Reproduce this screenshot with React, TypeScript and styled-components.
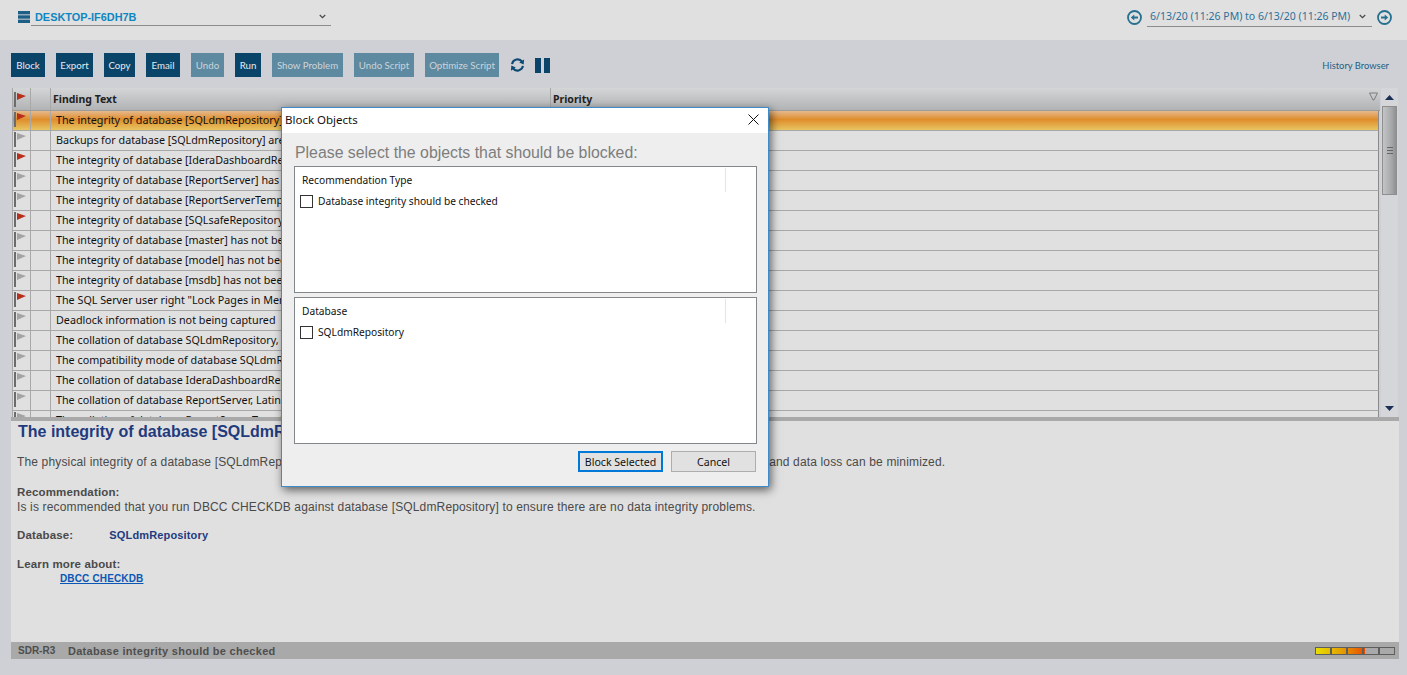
import React from 'react';
import styled, { createGlobalStyle } from 'styled-components';

const findings = [
  { text: 'The integrity of database [SQLdmRepository] has not been checked recently', red: true, selected: true },
  { text: 'Backups for database [SQLdmRepository] are not current', red: false },
  { text: 'The integrity of database [IderaDashboardRepository] has not been checked', red: true },
  { text: 'The integrity of database [ReportServer] has not been checked recently', red: false },
  { text: 'The integrity of database [ReportServerTempDB] has not been checked', red: false },
  { text: 'The integrity of database [SQLsafeRepository] has not been checked', red: true },
  { text: 'The integrity of database [master] has not been checked recently', red: false },
  { text: 'The integrity of database [model] has not been checked recently', red: false },
  { text: 'The integrity of database [msdb] has not been checked recently', red: false },
  { text: 'The SQL Server user right "Lock Pages in Memory" is not granted', red: true },
  { text: 'Deadlock information is not being captured', red: false },
  { text: 'The collation of database SQLdmRepository, Latin1 differs from the server', red: false },
  { text: 'The compatibility mode of database SQLdmRepository is out of date', red: false },
  { text: 'The collation of database IderaDashboardRepository differs', red: false },
  { text: 'The collation of database ReportServer, Latin1 differs from the server', red: false },
  { text: 'The collation of database ReportServerTempDB differs', red: false },
];

const actions = [
  { label: 'Block', width: 34 },
  { label: 'Export', width: 37 },
  { label: 'Copy', width: 31 },
  { label: 'Email', width: 34 },
  { label: 'Undo', width: 33, muted: true },
  { label: 'Run', width: 26 },
  { label: 'Show Problem', width: 71, muted: true },
  { label: 'Undo Script', width: 60, muted: true },
  { label: 'Optimize Script', width: 74, muted: true },
];

const FlagIcon = ({ red }: { red: boolean }) => (
  <svg width="13" height="15" viewBox="0 0 13 15" style={{ display: 'block' }}>
    <rect x="0" y="0" width="2" height="15" fill="#6b6b6b" />
    <path d="M3 1 L12 4 L3 8 Z" fill={red ? '#b8301c' : '#a3a3a3'} />
  </svg>
);

const ArrowCircle = ({ flip }: { flip?: boolean }) => (
  <svg width="15" height="15" viewBox="0 0 15 15" style={flip ? { transform: 'scaleX(-1)' } : undefined}>
    <circle cx="7.5" cy="7.5" r="6.5" fill="none" stroke="#23708f" strokeWidth="1.8" />
    <path d="M3.8 7.5 L7.3 4.4 V6.5 H11 V8.5 H7.3 V10.6 Z" fill="#23708f" />
  </svg>
);

const Chevron = () => (
  <svg width="7" height="5" viewBox="0 0 9 6">
    <path d="M1 1 L4.5 4.5 L8 1" fill="none" stroke="#4a4a4a" strokeWidth="1.6" />
  </svg>
);

export default function App() {
  return (
    <Page>
      <GlobalStyle />
      <TopBar>
        <ServerPicker>
          <svg width="12" height="12" viewBox="0 0 12 12">
            <rect width="12" height="3.4" fill="#1d5f86" />
            <rect y="4.3" width="12" height="3.4" fill="#1d5f86" />
            <rect y="8.6" width="12" height="3.4" fill="#1d5f86" />
          </svg>
          <ServerSelect>
            <ServerName>DESKTOP-IF6DH7B</ServerName>
            <Chevron />
          </ServerSelect>
        </ServerPicker>
        <DateRange>
          <ArrowCircle />
          <DateSelect>
            <DateText>6/13/20 (11:26 PM) to 6/13/20 (11:26 PM)</DateText>
            <Chevron />
          </DateSelect>
          <ArrowCircle flip />
        </DateRange>
      </TopBar>

      <Main>
        <Toolbar>
          {actions.map((a) => (
            <ActionButton key={a.label} $width={a.width} $muted={a.muted}>
              {a.label}
            </ActionButton>
          ))}
          <ToolIcons>
            <svg width="15" height="16" viewBox="0 0 16 16">
              <path d="M2.2 7 A6 6 0 0 1 13 4.6" fill="none" stroke="#0d4a73" strokeWidth="2.2" />
              <path d="M15 2 L14.6 7.4 L9.8 5.4 Z" fill="#0d4a73" />
              <path d="M13.8 9 A6 6 0 0 1 3 11.4" fill="none" stroke="#0d4a73" strokeWidth="2.2" />
              <path d="M1 14 L1.4 8.6 L6.2 10.6 Z" fill="#0d4a73" />
            </svg>
            <PauseIcon>
              <span />
              <span />
            </PauseIcon>
          </ToolIcons>
          <HistoryLink>History Browser</HistoryLink>
        </Toolbar>

        <GridArea>
          <Grid>
            <GridHeader>
              <HeaderFlagCell>
                <FlagIcon red />
              </HeaderFlagCell>
              <BlankCell />
              <HeaderCell $width={500}>Finding Text</HeaderCell>
              <PriorityCell>
                Priority
                <svg width="9" height="9" viewBox="0 0 9 9">
                  <path d="M0.5 1 H8.5 L5 8 H4 Z" fill="none" stroke="#7d7d7d" />
                </svg>
              </PriorityCell>
            </GridHeader>
            {findings.map((f) => (
              <Row key={f.text} $selected={f.selected}>
                <FlagCell>
                  <FlagIcon red={f.red} />
                </FlagCell>
                <BlankCell />
                <FindingCell>{f.text}</FindingCell>
              </Row>
            ))}
          </Grid>
          <Scrollbar>
            <ScrollArrow>
              <svg width="9" height="5" viewBox="0 0 9 5">
                <path d="M4.5 0 L9 5 H0 Z" fill="#1c2f55" />
              </svg>
            </ScrollArrow>
            <ScrollThumb>
              <Grip />
            </ScrollThumb>
            <ScrollTrack />
            <ScrollArrow>
              <svg width="9" height="5" viewBox="0 0 9 5">
                <path d="M4.5 5 L9 0 H0 Z" fill="#1c2f55" />
              </svg>
            </ScrollArrow>
          </Scrollbar>
        </GridArea>

        <Splitter />

        <Detail>
          <DetailTitle>The integrity of database [SQLdmRepository] has not been checked recently</DetailTitle>
          <DetailText>
            The physical integrity of a database [SQLdmRepository] should be checked on a regular schedule so that any
            corruption is detected early and data loss can be minimized.
          </DetailText>
          <DetailBlock>
            <strong>Recommendation:</strong>
            <br />
            Is is recommended that you run DBCC CHECKDB against database [SQLdmRepository] to ensure there are no data
            integrity problems.
          </DetailBlock>
          <DatabaseLine>
            <strong>Database:</strong>
            <DatabaseName>SQLdmRepository</DatabaseName>
          </DatabaseLine>
          <LearnMore>
            <strong>Learn more about:</strong>
            <DocLink>DBCC CHECKDB</DocLink>
          </LearnMore>
        </Detail>

        <Footer>
          <RuleCode>SDR-R3</RuleCode>
          <FooterTitle>Database integrity should be checked</FooterTitle>
          <Meter>
            <MeterFill />
            <MeterSeg />
            <MeterSeg />
            <MeterSeg />
            <MeterSeg />
            <MeterSeg />
          </Meter>
        </Footer>
      </Main>

      <Dialog>
        <DialogTitle>
          <span>Block Objects</span>
          <svg width="11" height="11" viewBox="0 0 11 11">
            <path d="M0.5 0.5 L10.5 10.5 M10.5 0.5 L0.5 10.5" stroke="#111" strokeWidth="1" />
          </svg>
        </DialogTitle>
        <DialogBody>
          <Prompt>Please select the objects that should be blocked:</Prompt>
          <ListBox $height={127}>
            <ListHeader>Recommendation Type</ListHeader>
            <CheckRow>
              <CheckBox />
              Database integrity should be checked
            </CheckRow>
          </ListBox>
          <ListBox $height={147}>
            <ListHeader>Database</ListHeader>
            <CheckRow>
              <CheckBox />
              SQLdmRepository
            </CheckRow>
          </ListBox>
          <DialogActions>
            <DialogButton $primary>Block Selected</DialogButton>
            <DialogButton>Cancel</DialogButton>
          </DialogActions>
        </DialogBody>
      </Dialog>
    </Page>
  );
}

const GlobalStyle = createGlobalStyle`
  html, body {
    margin: 0;
    padding: 0;
    background: #cfd0d5;
  }
  * {
    box-sizing: border-box;
  }
`;

const Page = styled.div`
  position: relative;
  width: 1407px;
  height: 675px;
  overflow: hidden;
  display: flex;
  flex-direction: column;
  background: #cfd0d5;
  font-family: 'Noto Sans', sans-serif;
`;

const TopBar = styled.div`
  height: 40px;
  flex: none;
  display: flex;
  justify-content: space-between;
  background: #e0e0e0;
  padding: 0 15px 0 18px;
`;

const ServerPicker = styled.div`
  display: flex;
  align-items: flex-start;
  gap: 1px;
  padding-top: 11px;
`;

const ServerSelect = styled.div`
  width: 300px;
  height: 15px;
  display: flex;
  justify-content: space-between;
  align-items: center;
  padding: 0 5px 3px 4px;
  border-bottom: 1px solid #8c8c8c;
`;

const ServerName = styled.span`
  font-family: 'Liberation Sans', sans-serif;
  font-size: 10.9px;
  font-weight: 700;
  color: #0f86c0;
`;

const DateRange = styled.div`
  display: flex;
  align-items: center;
  gap: 5px;
  height: 34px;
`;

const DateSelect = styled.div`
  width: 225px;
  height: 19px;
  margin-top: 1px;
  display: flex;
  justify-content: space-between;
  align-items: center;
  padding: 0 6px 2px 3px;
  border-bottom: 1px solid #8c8c8c;
`;

const DateText = styled.span`
  font-size: 10.5px;
  color: #2d7199;
  white-space: nowrap;
`;

const Main = styled.div`
  flex: 1;
  display: flex;
  flex-direction: column;
  padding: 0 8px 16px 11px;
  min-height: 0;
`;

const Toolbar = styled.div`
  height: 48px;
  flex: none;
  display: flex;
  align-items: flex-start;
  gap: 11px;
  padding-top: 13px;
`;

const ActionButton = styled.div<{ $width: number; $muted?: boolean }>`
  width: ${({ $width }) => $width}px;
  height: 24px;
  display: flex;
  align-items: center;
  justify-content: center;
  font-family: Lato, sans-serif;
  font-size: 9.7px;
  white-space: nowrap;
  background: ${({ $muted }) => ($muted ? '#5d8aa1' : '#0b4469')};
  color: ${({ $muted }) => ($muted ? '#ccd4da' : '#e6ebef')};
`;

const ToolIcons = styled.div`
  display: flex;
  align-items: center;
  gap: 10px;
  height: 24px;
`;

const PauseIcon = styled.div`
  display: flex;
  gap: 3px;
  span {
    display: block;
    width: 6px;
    height: 15px;
    background: #0b4469;
  }
`;

const HistoryLink = styled.div`
  margin-left: auto;
  margin-right: 10px;
  height: 24px;
  line-height: 26px;
  font-family: Lato, sans-serif;
  font-size: 9.4px;
  color: #1c5f86;
`;

const GridArea = styled.div`
  height: 329px;
  flex: none;
  display: flex;
  gap: 1px;
  overflow: hidden;
`;

const Grid = styled.div`
  width: 1369px;
  padding-left: 1px;
  overflow: hidden;
`;

const GridHeader = styled.div`
  height: 23px;
  display: flex;
  background: linear-gradient(#d3d5d7, #b2b3b4);
  border-bottom: 1px solid #9c9c9c;
`;

const Row = styled.div<{ $selected?: boolean }>`
  height: 20px;
  margin-right: 1px;
  display: flex;
  border-bottom: 1px solid #a8a8a8;
  border-right: 1px solid #8a8a8a;
  background: ${({ $selected }) =>
    $selected ? 'linear-gradient(#e5b98d, #e08d2c 45%, #e7c662)' : '#e0e0e0'};
`;

const FlagCell = styled.div`
  width: 19px;
  flex: none;
  padding: 1px 0 0 1px;
  border-left: 1px solid #a8a8a8;
  border-right: 1px solid #a8a8a8;
  overflow: hidden;
`;

const HeaderFlagCell = styled(FlagCell)`
  padding-top: 4px;
`;

const BlankCell = styled.div`
  width: 20px;
  flex: none;
  border-right: 1px solid #a8a8a8;
`;

const HeaderCell = styled.div<{ $width: number }>`
  width: ${({ $width }) => $width}px;
  flex: none;
  padding: 4px 0 0 2px;
  font-size: 10.5px;
  font-weight: 700;
  color: #222;
  border-right: 1px solid #a8a8a8;
`;

const PriorityCell = styled.div`
  flex: 1;
  display: flex;
  justify-content: space-between;
  padding: 4px 2px 0 2px;
  font-size: 10.5px;
  font-weight: 700;
  color: #222;
`;

const FindingCell = styled.div`
  width: 500px;
  flex: none;
  padding: 1px 0 0 5px;
  font-size: 10.75px;
  line-height: 16px;
  color: #111;
  white-space: nowrap;
  overflow: hidden;
`;

const Scrollbar = styled.div`
  width: 17px;
  flex: none;
  display: flex;
  flex-direction: column;
  background: #d5d6da;
`;

const ScrollArrow = styled.div`
  height: 18px;
  flex: none;
  display: flex;
  align-items: center;
  justify-content: center;
`;

const ScrollThumb = styled.div`
  height: 89px;
  flex: none;
  margin: 0 1px;
  border: 1px solid #8e8e8e;
  background: linear-gradient(90deg, #c4c5c7, #a9aaac 60%, #8f9092);
  display: flex;
  align-items: center;
  justify-content: center;
`;

const Grip = styled.div`
  width: 6px;
  height: 7px;
  border-top: 1px solid #666;
  border-bottom: 1px solid #666;
  background: linear-gradient(transparent 2px, #666 2px, #666 3px, transparent 3px);
`;

const ScrollTrack = styled.div`
  flex: 1;
`;

const Splitter = styled.div`
  height: 4px;
  flex: none;
  background: #a9a9a9;
`;

const Detail = styled.div`
  flex: 1;
  min-height: 0;
  background: #e0e0e0;
  padding: 2px 6px 0;
  font-family: 'Liberation Sans', sans-serif;
  font-size: 12px;
  letter-spacing: 0.15px;
  line-height: 15px;
  color: #4a4a4a;
  strong {
    font-size: 11.5px;
    font-weight: 700;
  }
`;

const DetailTitle = styled.div`
  font-size: 16px;
  line-height: 18px;
  font-weight: 700;
  letter-spacing: 0;
  color: #1f3b7d;
  white-space: nowrap;
  margin: 0 0 14px 1px;
`;

const DetailText = styled.div`
  white-space: nowrap;
  margin-bottom: 15px;
`;

const DetailBlock = styled.div`
  white-space: nowrap;
  margin-bottom: 13px;
`;

const DatabaseLine = styled.div`
  display: flex;
  margin-bottom: 14px;
`;

const DatabaseName = styled.span`
  margin-left: 36px;
  font-size: 11px;
  font-weight: 700;
  color: #1f3b7d;
`;

const LearnMore = styled.div`
  display: flex;
  flex-direction: column;
`;

const DocLink = styled.span`
  margin-left: 43px;
  margin-top: -1px;
  font-size: 10px;
  font-weight: 700;
  color: #0b57b5;
  text-decoration: underline;
`;

const Footer = styled.div`
  height: 17px;
  flex: none;
  display: flex;
  align-items: center;
  padding: 0 4px 0 7px;
  background: #a9a9a9;
  font-family: 'Liberation Sans', sans-serif;
  font-size: 11px;
  font-weight: 700;
  color: #4e4e4e;
`;

const RuleCode = styled.span`
  width: 50px;
  font-size: 10px;
`;

const FooterTitle = styled.span`
  letter-spacing: 0.28px;
`;

const Meter = styled.div`
  position: relative;
  margin-left: auto;
  display: flex;
`;

const MeterFill = styled.div`
  position: absolute;
  left: 1px;
  top: 1px;
  width: 49px;
  height: 6px;
  background: linear-gradient(90deg, #e9de00, #e4a200 50%, #e84e00);
`;

const MeterSeg = styled.div`
  position: relative;
  width: 16px;
  height: 8px;
  border: 1px solid #5e5e5e;
`;

const Dialog = styled.div`
  position: absolute;
  left: 281px;
  top: 107px;
  width: 488px;
  height: 380px;
  display: flex;
  flex-direction: column;
  border: 1px solid #3f8ac8;
  box-shadow: 2px 3px 9px rgba(0, 0, 0, 0.6);
  background: #eeeeee;
  font-family: 'Noto Sans', sans-serif;
  color: #111;
`;

const DialogTitle = styled.div`
  height: 25px;
  flex: none;
  display: flex;
  justify-content: space-between;
  align-items: center;
  padding: 0 9px 2px 3px;
  background: #fff;
  font-size: 11.5px;
`;

const DialogBody = styled.div`
  flex: 1;
  display: flex;
  flex-direction: column;
  gap: 4px;
  padding: 0 11px 0 12px;
`;

const Prompt = styled.div`
  height: 29px;
  flex: none;
  padding-left: 1px;
  line-height: 39px;
  font-family: 'Liberation Sans', sans-serif;
  font-size: 15.85px;
  color: #7d7d7d;
  white-space: nowrap;
`;

const ListBox = styled.div<{ $height: number }>`
  height: ${({ $height }) => $height}px;
  flex: none;
  background: #fff;
  border: 1px solid #82878c;
`;

const ListHeader = styled.div`
  height: 24px;
  width: 431px;
  padding: 5px 0 0 7px;
  margin-top: 1px;
  font-size: 10.2px;
  line-height: 15px;
  border-right: 1px solid #e4e4e4;
`;

const CheckRow = styled.div`
  display: flex;
  align-items: center;
  gap: 5px;
  padding: 2px 0 0 5px;
  font-size: 10.2px;
  line-height: 15px;
`;

const CheckBox = styled.span`
  width: 13px;
  height: 13px;
  flex: none;
  background: #fff;
  border: 1px solid #333;
`;

const DialogActions = styled.div`
  display: flex;
  justify-content: flex-end;
  gap: 8px;
  padding: 3px 1px 0 0;
`;

const DialogButton = styled.div<{ $primary?: boolean }>`
  width: 85px;
  height: 21px;
  display: flex;
  align-items: center;
  justify-content: center;
  background: #e1e1e1;
  font-size: 10.6px;
  border: ${({ $primary }) => ($primary ? '2px solid #0078d7' : '1px solid #adadad')};
`;
